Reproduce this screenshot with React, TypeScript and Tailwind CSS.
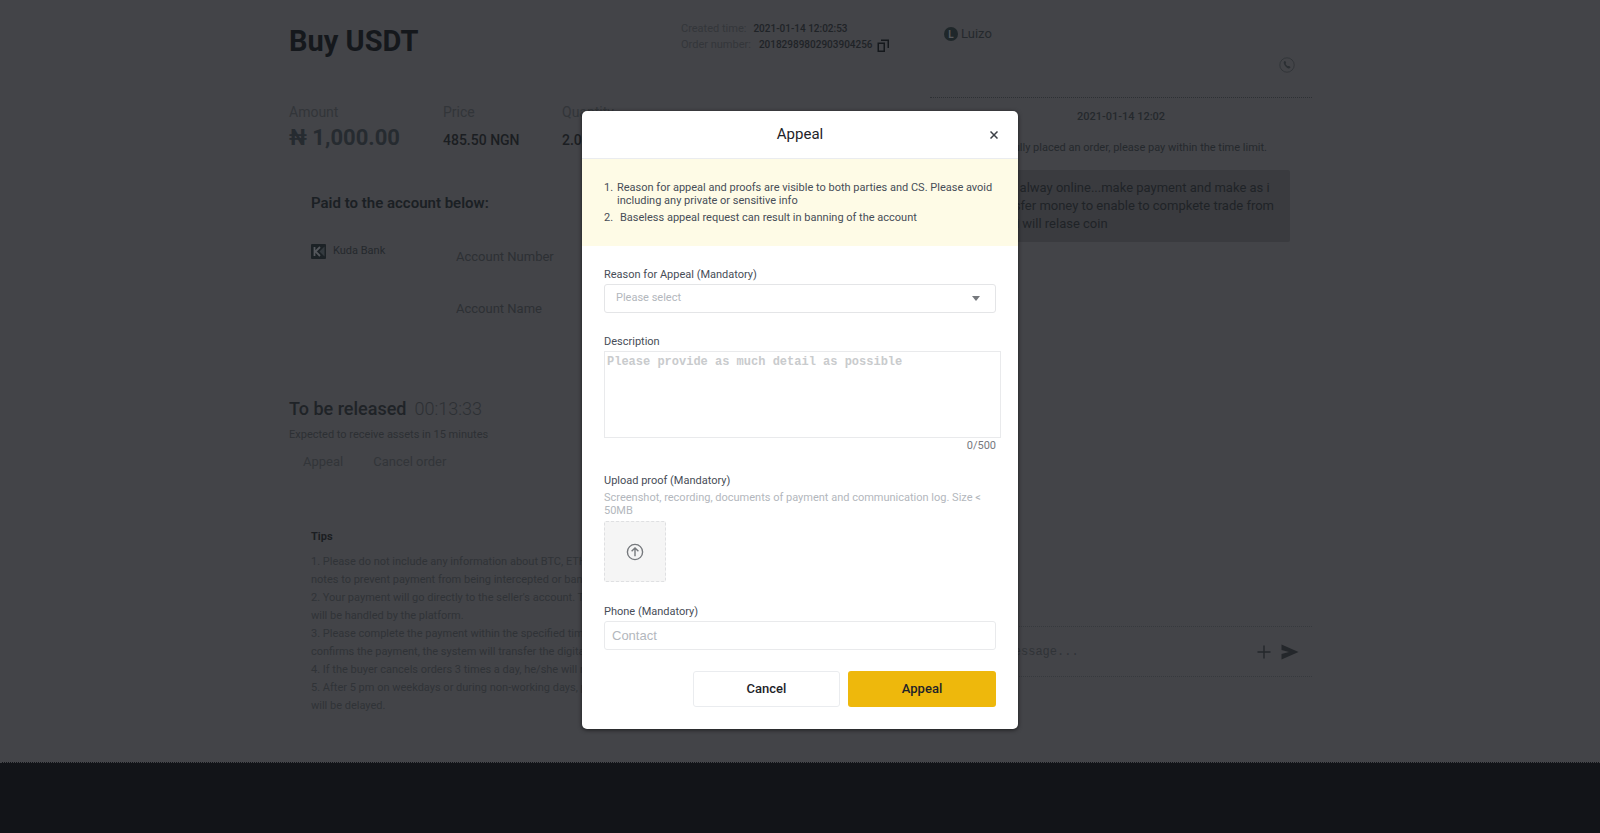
import React, { useState } from "react";

// ---------------------------------------------------------------------------
// TYPES
// ---------------------------------------------------------------------------
interface Stat {
  label: string;
  value: string;
  width: string;
  valueClass: string;
}

// ---------------------------------------------------------------------------
// DATA
// ---------------------------------------------------------------------------
const STATS: Stat[] = [
  { label: "Amount", value: "₦ 1,000.00", width: "w-[154px]", valueClass: "text-[22px] font-bold text-[#262b30]" },
  { label: "Price", value: "485.50 NGN", width: "w-[119px]", valueClass: "pt-0.5 text-sm font-medium text-[#1b1e22]" },
  { label: "Quantity", value: "2.06 USDT", width: "w-[119px]", valueClass: "pt-0.5 text-sm font-medium text-[#1b1e22]" },
];

const TIPS: string[] = [
  "1. Please do not include any information about BTC, ETH, etc.",
  "notes to prevent payment from being intercepted or banned.",
  "2. Your payment will go directly to the seller's account. They",
  "will be handled by the platform.",
  "3. Please complete the payment within the specified time",
  "confirms the payment, the system will transfer the digital",
  "4. If the buyer cancels orders 3 times a day, he/she will not",
  "5. After 5 pm on weekdays or during non-working days, pay",
  "will be delayed.",
];

const MAX_LENGTH = 500;

// ---------------------------------------------------------------------------
// ICONS
// ---------------------------------------------------------------------------
const CopyIcon = () => (
  <svg viewBox="0 0 12 13" className="h-[13px] w-3" fill="none" stroke="currentColor" strokeWidth="1.5">
    <path d="M1.25 4.25h6v8h-6z" />
    <path d="M4 1.25h7.25V9" />
  </svg>
);

const PhoneIcon = () => (
  <svg viewBox="0 0 16 16" className="size-4">
    <circle cx="8" cy="8" r="7.2" fill="none" stroke="#2f3236" strokeWidth="0.8" />
    <path
      d="M5.2 4.4c.5-.5 1-.5 1.3.1l.5 1.1c.2.4 0 .8-.4 1.1.3 1 1.3 2.1 2.3 2.6.4-.4.8-.5 1.2-.2l1 .7c.5.4.5.8 0 1.2-.7.6-1.5.6-2.7-.1C6.5 9.8 5.2 8.2 4.8 6.3c-.2-.8-.1-1.4.4-1.9z"
      fill="#2b2f33"
    />
  </svg>
);

const KudaLogo = () => (
  <svg viewBox="0 0 15 15" className="size-[15px]">
    <rect width="15" height="15" rx="1" fill="#1c2226" />
    <path d="M3.5 3v9M9 3L4.5 7.5 9 12" fill="none" stroke="#55585d" strokeWidth="1.8" />
    <path d="M13.5 2.5v10L8.5 7.5z" fill="#343a3f" />
  </svg>
);

const UploadIcon = () => (
  <svg viewBox="0 0 18 18" className="size-[18px]" fill="none" stroke="#76797d" strokeWidth="1.4">
    <circle cx="9" cy="9" r="7.6" />
    <path d="M9 13.2V5M5.6 8.3L9 4.9l3.4 3.4" />
  </svg>
);

// ---------------------------------------------------------------------------
// ORDER (left column)
// ---------------------------------------------------------------------------
const Order: React.FC = () => (
  <section className="w-[603px] shrink-0 pl-px">
    <div className="flex justify-between pt-5">
      <h1 className="pt-[3px] text-[29px] leading-9 font-bold text-[#15181c]">Buy USDT</h1>
      <dl className="w-[210px] pt-px text-[10px] leading-4 text-[#33363a]">
        <div className="flex gap-[7px]">
          <dt className="text-[11px]">Created time:</dt>
          <dd className="font-medium text-[#1f2327]">2021-01-14 12:02:53</dd>
        </div>
        <div className="flex gap-2">
          <dt className="text-[11px]">Order number:</dt>
          <dd className="flex items-center gap-1 font-medium text-[#1f2327]">
            20182989802903904256
            <button type="button" aria-label="Copy order number" className="text-[#15181c]">
              <CopyIcon />
            </button>
          </dd>
        </div>
      </dl>
    </div>

    <dl className="mt-[41px] flex">
      {STATS.map((stat) => (
        <div key={stat.label} className={stat.width}>
          <dt className="text-sm leading-6 text-[#323539]">{stat.label}</dt>
          <dd className={`leading-7 ${stat.valueClass}`}>{stat.value}</dd>
        </div>
      ))}
    </dl>

    <div className="mt-[37px] h-[206px] pl-[22px]">
      <h2 className="text-[15px] leading-6 font-semibold text-[#1b2024]">Paid to the account below:</h2>
      <div className="flex pt-7">
        <div className="flex h-4 w-[145px] items-center gap-[7px] text-[11px] text-[#25292d]">
          <KudaLogo />
          Kuda Bank
        </div>
        <div className="flex flex-col gap-8 pt-1 text-[13px] leading-5 text-[#2d3034]">
          <span>Account Number</span>
          <span>Account Name</span>
        </div>
      </div>
    </div>

    <div className="flex gap-2 text-lg leading-6">
      <h2 className="font-medium text-[#1f2327]">To be released</h2>
      <span className="font-light text-[#2d3034]">00:13:33</span>
    </div>
    <p className="mt-1 text-[11px] leading-5 text-[#2d3034]">Expected to receive assets in 15 minutes</p>
    <div className="mt-[7px] flex gap-[30px] pl-[14px] text-[13px] leading-5 text-[#323539]">
      <button type="button">Appeal</button>
      <button type="button">Cancel order</button>
    </div>

    <div className="mt-[55px] pl-[22px] text-[11px] text-[#303337]">
      <h3 className="leading-5 font-bold text-[#1b1e22]">Tips</h3>
      <div className="mt-1.5 leading-[18px]">
        {TIPS.map((tip) => (
          <p key={tip}>{tip}</p>
        ))}
      </div>
    </div>
  </section>
);

// ---------------------------------------------------------------------------
// CHAT (right column)
// ---------------------------------------------------------------------------
const Chat: React.FC = () => (
  <section className="flex w-[382px] shrink-0 flex-col text-[#25292d]">
    <div className="flex h-[98px] flex-col border-b border-dotted border-[#2d3034] pt-6">
      <div className="flex h-5 items-center gap-[3px] pl-[14px] text-[13px]">
        <span className="flex size-[14px] items-center justify-center rounded-full bg-[#1f272a] text-[10px] font-bold text-[#55585c]">
          L
        </span>
        Luizo
      </div>
      <button type="button" aria-label="Call" className="mt-[13px] mr-[17px] self-end">
        <PhoneIcon />
      </button>
    </div>
    <p className="pt-[9px] text-center text-[11px] leading-5 font-medium">2021-01-14 12:02</p>
    <p className="mt-[11px] flex justify-end pr-[45px] text-[11px] leading-5 whitespace-nowrap">
      You've successfully placed an order, please pay within the time limit.
    </p>
    <p className="mt-3 mr-[22px] self-end rounded-xs bg-[#3a3b3f] py-[9px] pr-4 pl-3 text-[13px] leading-[18px] whitespace-nowrap text-[#1f2327]">
      I am alway online...make payment and make as i
      <br />
      transfer money to enable to compkete trade from
      <br />
      and i will relase coin
    </p>
    <form className="mt-auto mb-[85px] flex h-[51px] items-center border-y border-dotted border-[#36393d] pr-[13px]">
      <input
        aria-label="Message"
        placeholder="Write a message..."
        className="min-w-0 flex-1 pl-[19px] font-['Liberation_Mono',monospace] text-xs placeholder:text-[#303337]"
      />
      <button type="button" aria-label="Add attachment" className="mr-2.5">
        <svg viewBox="0 0 14 14" className="size-[14px]" stroke="#24272b" strokeWidth="1.4">
          <path d="M7 .5v13M.5 7h13" />
        </svg>
      </button>
      <button type="button" aria-label="Send">
        <svg viewBox="0 0 18 16" className="h-4 w-[18px]" fill="#24272b">
          <path d="M.5.5L17.5 8 .5 15.5V10L8 8 .5 6z" />
        </svg>
      </button>
    </form>
  </section>
);

// ---------------------------------------------------------------------------
// APPEAL DIALOG
// ---------------------------------------------------------------------------
const AppealDialog: React.FC = () => {
  const [description, setDescription] = useState("");

  return (
    <div className="absolute inset-0 z-10 flex items-start justify-center pt-[111px]">
      <div
        role="dialog"
        aria-labelledby="appeal-title"
        className="w-[436px] overflow-hidden rounded-[5px] bg-white text-[11px] text-[#474d57] shadow-[0_1px_4px_rgba(0,0,0,0.6)]"
      >
        <header className="grid h-12 grid-cols-[1fr_auto_1fr] items-center border-b border-[#eaecef] px-[18px]">
          <h2 id="appeal-title" className="col-start-2 text-[15px] text-[#1e2329]">
            Appeal
          </h2>
          <button type="button" aria-label="Close" className="flex size-3 items-center justify-center justify-self-end">
            <svg viewBox="0 0 8 8" className="size-2" stroke="#3c4046" strokeWidth="1.5">
              <path d="M.5.5l7 7M7.5.5l-7 7" />
            </svg>
          </button>
        </header>

        <ol className="flex h-[87px] flex-col gap-1 bg-[#fefbe6] px-[22px] pt-[22px] leading-[13px]">
          <li className="flex">
            <span className="w-[13px] shrink-0">1.</span>
            Reason for appeal and proofs are visible to both parties and CS. Please avoid including any private or
            sensitive info
          </li>
          <li className="flex">
            <span className="w-4 shrink-0">2.</span>
            Baseless appeal request can result in banning of the account
          </li>
        </ol>

        <form className="flex flex-col px-[22px] pt-5 pb-[22px]">
          <label htmlFor="reason" className="leading-[18px]">
            Reason for Appeal (Mandatory)
          </label>
          <div className="relative">
            <select
              id="reason"
              defaultValue=""
              className="block h-[29px] w-full appearance-none rounded-[3px] border border-[#e4e5e7] bg-white px-[11px] text-[#b3b7bd]"
            >
              <option value="">Please select</option>
            </select>
            <svg viewBox="0 0 8 5" className="pointer-events-none absolute top-3 right-4 h-[5px] w-2">
              <path d="M0 0h8L4 5z" fill="#76797d" />
            </svg>
          </div>

          <label htmlFor="description" className="mt-5 leading-[18px]">
            Description
          </label>
          <textarea
            id="description"
            value={description}
            maxLength={MAX_LENGTH}
            onChange={(e) => setDescription(e.target.value)}
            placeholder="Please provide as much detail as possible"
            className="-mr-[5px] h-[87px] resize-none border border-[#e9eaec] px-0.5 py-0.5 font-['Liberation_Mono',monospace] text-xs font-bold placeholder:text-[#c9cbcd]"
          />
          <span className="text-right leading-4 text-[#76797d]">
            {description.length}/{MAX_LENGTH}
          </span>

          <label htmlFor="proof" className="mt-[18px] leading-[18px]">
            Upload proof (Mandatory)
          </label>
          <p className="mt-px leading-[13px] text-[#b3b7bd]">
            Screenshot, recording, documents of payment and communication log. Size &lt; 50MB
          </p>
          <button
            id="proof"
            type="button"
            aria-label="Upload proof"
            className="mt-1 flex h-[61px] w-[62px] items-center justify-center rounded-xs border border-dashed border-[#dfe0e2] bg-[#f5f5f5]"
          >
            <UploadIcon />
          </button>

          <label htmlFor="phone" className="mt-[21px] leading-[18px]">
            Phone (Mandatory)
          </label>
          <input
            id="phone"
            type="tel"
            placeholder="Contact"
            className="h-[29px] rounded-[3px] border border-[#e9eaec] px-[7px] font-['Liberation_Sans',sans-serif] text-[13px] placeholder:text-[#b3b7bd]"
          />

          <div className="mt-[21px] flex justify-end gap-2 text-[13px] font-medium text-[#1e2329]">
            <button type="button" className="h-9 w-[147px] rounded-[3px] border border-[#eaecef]">
              Cancel
            </button>
            <button type="button" className="h-9 w-[148px] rounded-[3px] bg-[#eeb80c]">
              Appeal
            </button>
          </div>
        </form>
      </div>
    </div>
  );
};

// ---------------------------------------------------------------------------
// APP
// ---------------------------------------------------------------------------
export default function App() {
  return (
    <main className="relative flex min-h-screen flex-col bg-[#434448] font-[Roboto,sans-serif]">
      <div className="mx-auto flex min-h-[762px] w-full max-w-5xl justify-between">
        <Order />
        <Chat />
      </div>
      <footer className="flex-1 border-t border-dotted border-[#434448] bg-[#121418]" />
      <AppealDialog />
    </main>
  );
}
